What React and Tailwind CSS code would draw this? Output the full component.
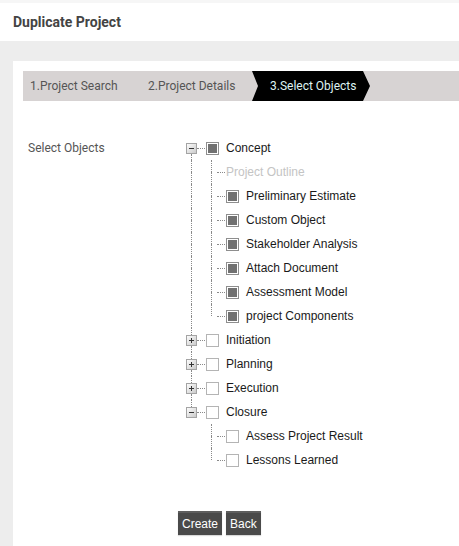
import React from 'react';

const treeFont = { fontFamily: '"Liberation Sans", Arial, sans-serif' };

function Expander({ open }) {
  return (
    <svg width="11" height="11" viewBox="0 0 11 11" className="shrink-0">
      <defs>
        <linearGradient id={open ? 'gm' : 'gp'} x1="0" y1="0" x2="1" y2="1">
          <stop offset="0" stopColor="#ffffff" />
          <stop offset="1" stopColor="#c8c8c8" />
        </linearGradient>
      </defs>
      <rect x="0.5" y="0.5" width="10" height="10" fill={`url(#${open ? 'gm' : 'gp'})`} stroke="#a4a4a4" />
      <line x1="3" y1="5.5" x2="8" y2="5.5" stroke="#333" />
      {!open && <line x1="5.5" y1="3" x2="5.5" y2="8" stroke="#333" />}
    </svg>
  );
}

function Check({ on }) {
  return (
    <span className={`w-[13px] h-[13px] shrink-0 border bg-white flex items-center justify-center ${on ? 'border-[#8e8e8e]' : 'border-[#b4b4b4]'}`}>
      {on && <span className="w-[9px] h-[9px] bg-[#717171]" />}
    </span>
  );
}

// one vertical line cell, halves drawn or not
function VLine({ top, bottom, w }) {
  return (
    <div className={`${w} shrink-0 flex flex-col items-center self-stretch`}>
      <div className={`flex-1 w-0 ${top ? 'border-l border-dotted border-[#8a8a8a]' : ''}`} />
      <div className={`flex-1 w-0 ${bottom ? 'border-l border-dotted border-[#8a8a8a]' : ''}`} />
    </div>
  );
}

function TopRow({ label, checked, open, first, last }) {
  return (
    <div className="h-6 flex items-center">
      <div className="w-[11px] shrink-0 flex flex-col items-center self-stretch">
        <div className={`flex-1 w-0 ${first ? '' : 'border-l border-dotted border-[#8a8a8a]'}`} />
        <Expander open={open} />
        <div className={`flex-1 w-0 ${last ? '' : 'border-l border-dotted border-[#8a8a8a]'}`} />
      </div>
      <div className="w-[8px] border-t border-dotted border-[#8a8a8a]" />
      <div className="ml-px">
        <Check on={checked} />
      </div>
      <span className="ml-[7px] text-[12px] text-[#1a1a1a]">{label}</span>
    </div>
  );
}

function ChildRow({ label, checked, last, outer, disabled }) {
  return (
    <div className="h-6 flex items-center">
      <VLine top={outer} bottom={outer} w="w-[11px]" />
      <div className="w-[9px] shrink-0" />
      <VLine top bottom={!last} w="w-[11px]" />
      <div className="w-[8px] border-t border-dotted border-[#8a8a8a]" />
      {disabled ? (
        <span className="ml-px text-[12px] text-[#c4c4c4]">{label}</span>
      ) : (
        <>
          <div className="ml-px">
            <Check on={checked} />
          </div>
          <span className="ml-[7px] text-[12px] text-[#1a1a1a]">{label}</span>
        </>
      )}
    </div>
  );
}

const conceptKids = [
  'Preliminary Estimate',
  'Custom Object',
  'Stakeholder Analysis',
  'Attach Document',
  'Assessment Model',
  'project Components',
];

export default function App() {
  return (
    <div className="min-h-screen bg-[#ededed] flex flex-col" style={{ fontFamily: 'Roboto, "Liberation Sans", sans-serif' }}>
      {/* Header */}
      <div className="h-[41px] bg-white border-t-[3px] border-[#f6f6f6] flex items-center px-[13px]">
        <h1 className="text-[14px] font-bold text-[#444]">Duplicate Project</h1>
      </div>

      {/* Panel */}
      <div className="flex-1 mt-5 ml-[13px] bg-white pt-[10px] pl-[10px]">
        {/* Wizard */}
        <div className="h-[30px] bg-[#d7d3d3] flex items-center text-[12px]">
          <div className="pl-[7px] w-[125px] text-[#555]">1.Project Search</div>
          <div className="w-[104px] text-[#555]">2.Project Details</div>
          <div className="h-full w-[118px] bg-black text-[#dff3f2] flex items-center pl-[18px] [clip-path:polygon(0_0,calc(100%-7px)_0,100%_50%,calc(100%-7px)_100%,0_100%,6px_50%)]">
            3.Select Objects
          </div>
        </div>

        {/* Content */}
        <div className="flex mt-[35px]">
          <div className="w-[163px] pl-[5px] h-6 flex items-center text-[12px] text-[#555]">Select Objects</div>
          <div style={treeFont}>
            <TopRow label="Concept" checked open first />
            <ChildRow label="Project Outline" outer disabled />
            {conceptKids.map((k, i) => (
              <ChildRow key={k} label={k} checked outer last={i === conceptKids.length - 1} />
            ))}
            <TopRow label="Initiation" />
            <TopRow label="Planning" />
            <TopRow label="Execution" />
            <TopRow label="Closure" open last />
            <ChildRow label="Assess Project Result" />
            <ChildRow label="Lessons Learned" last />
          </div>
        </div>

        {/* Buttons */}
        <div className="flex gap-1 mt-[39px] ml-[155px]">
          <button className="h-6 px-[4px] bg-[#4a4a4a] border-t-2 border-[#5e5e5e] text-white text-[12px] shadow-[0_1px_1px_rgba(0,0,0,0.15)]" style={treeFont}>
            Create
          </button>
          <button className="h-6 px-[4px] bg-[#4a4a4a] border-t-2 border-[#5e5e5e] text-white text-[12px] shadow-[0_1px_1px_rgba(0,0,0,0.15)]" style={treeFont}>
            Back
          </button>
        </div>
      </div>
    </div>
  );
}
